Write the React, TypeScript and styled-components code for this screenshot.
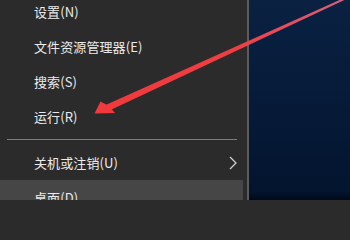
import React from 'react';
import styled, { createGlobalStyle } from 'styled-components';

const GlobalStyle = createGlobalStyle`
	html, body {
		margin: 0;
		padding: 0;
		background: #2b2b2b;
	}
	body {
		width: 350px;
		height: 200px;
		overflow: hidden;
		font-family: 'Noto Sans CJK SC', 'Noto Sans', sans-serif;
	}
`;

const Screen = styled.div`
	position: relative;
	display: flex;
	width: 350px;
	height: 200px;
	overflow: hidden;
`;

const MenuPanel = styled.div`
	width: 247px;
	height: 200px;
	background: #2b2b2b;
	overflow: hidden;
`;

const MenuList = styled.ul`
	list-style: none;
	margin: -6px 0 0 0;
	padding: 0;
`;

const MenuItem = styled.li<{ $active?: boolean }>`
	display: flex;
	align-items: center;
	justify-content: space-between;
	height: 35px;
	padding: 0 6px 0 34px;
	margin-right: 4px;
	background: ${(p) => (p.$active ? '#464646' : 'transparent')};
	color: #ebebeb;
	font-size: 13px;
	letter-spacing: 0.1px;
`;

const Separator = styled.li`
	padding: 5px 10px 5px 7px;
	&::after {
		content: '';
		display: block;
		height: 1px;
		background: #7b7b7b;
	}
`;

const Edge = styled.div`
	width: 2px;
	background: #5c5c5c;
`;

const Desktop = styled.div`
	flex: 1;
	background: linear-gradient(180deg, #0a2142 0%, #061a38 55%, #03142e 96%, #01091a 100%);
`;

const Overlay = styled.svg`
	position: absolute;
	left: 0;
	top: 0;
	pointer-events: none;
`;

const Chevron = () => (
	<svg width="8" height="14" viewBox="0 0 8 14">
		<path d="M1 1 L7 7 L1 13" fill="none" stroke="#cfcfcf" strokeWidth="1.3" />
	</svg>
);

const items = ['设置(N)', '文件资源管理器(E)', '搜索(S)', '运行(R)'];

export default function App() {
	return (
		<>
			<GlobalStyle />
			<Screen>
				<MenuPanel>
					<MenuList>
						{items.map((t) => (
							<MenuItem key={t}>{t}</MenuItem>
						))}
						<Separator />
						<MenuItem>
							<span>关机或注销(U)</span>
							<Chevron />
						</MenuItem>
						<MenuItem $active>桌面(D)</MenuItem>
					</MenuList>
				</MenuPanel>
				<Edge />
				<Desktop />
				<Overlay width="350" height="200" viewBox="0 0 350 200">
					<defs>
						<linearGradient id="shaft" x1="107" y1="108" x2="344" y2="-1" gradientUnits="userSpaceOnUse">
							<stop offset="0" stopColor="#f03a3c" />
							<stop offset="0.55" stopColor="#ef3e42" />
							<stop offset="1" stopColor="#d8607a" />
						</linearGradient>
					</defs>
					<polygon points="108.4,111 105.6,105 343.6,-1.8 344.4,0" fill="url(#shaft)" />
					<polygon points="94.5,113.5 100.5,101.5 109,106 115,113" fill="#f03a3c" />
				</Overlay>
			</Screen>
		</>
	);
}
